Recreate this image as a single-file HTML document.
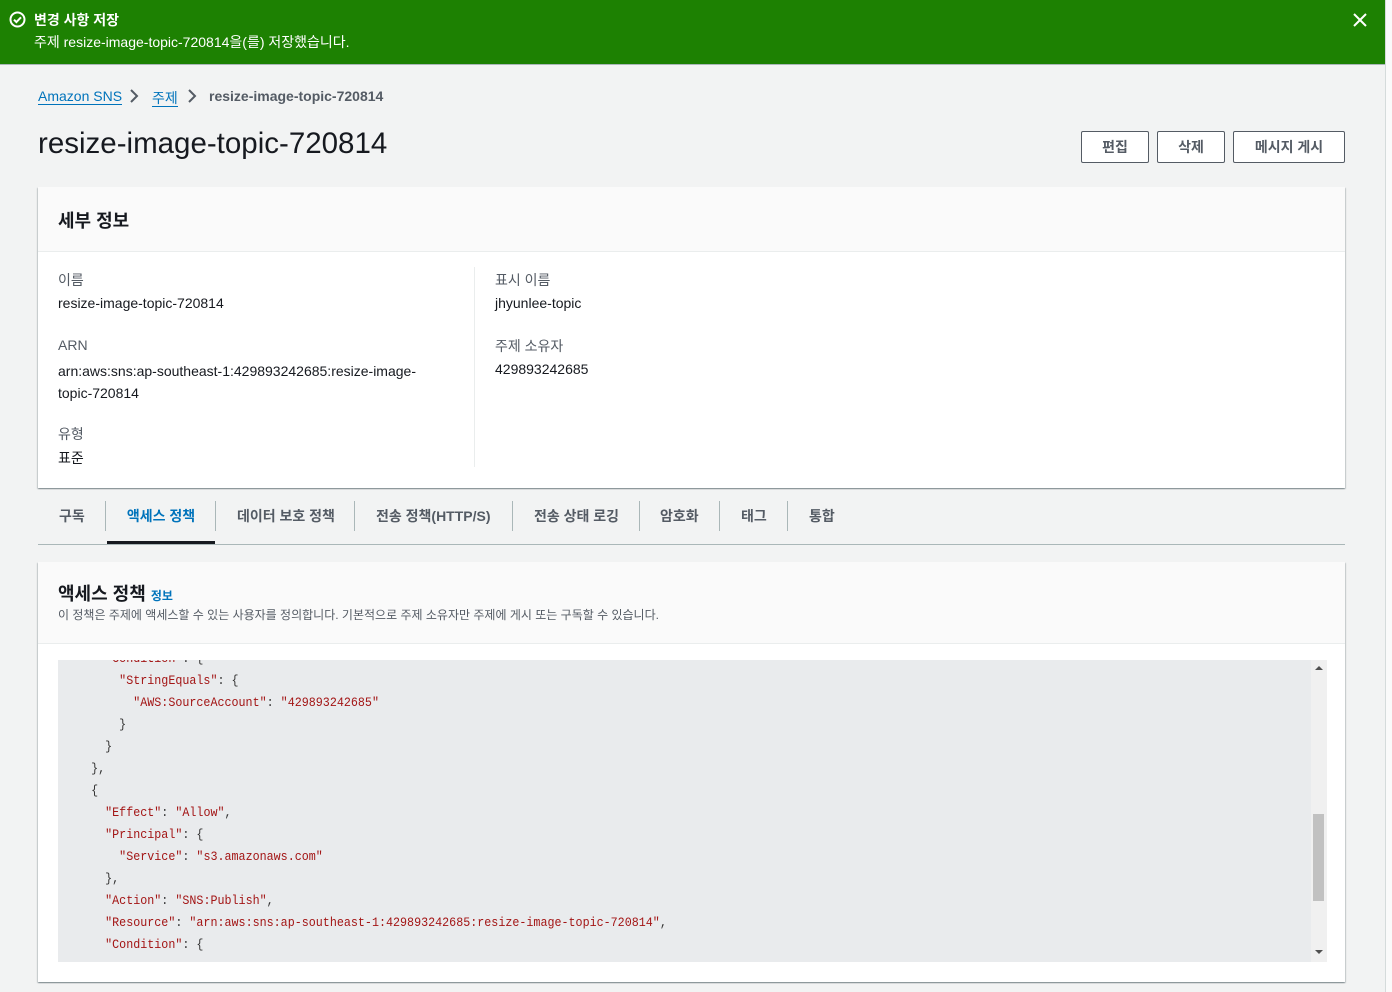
<!DOCTYPE html>
<html><head><meta charset="utf-8"><style>
*{box-sizing:border-box;margin:0;padding:0}
body{width:1392px;height:992px;overflow:hidden;background:#f2f3f3;font-family:"Liberation Sans","Noto Sans CJK KR",sans-serif;color:#16191f;position:relative}
.flash{position:absolute;left:0;top:0;width:1385px;height:65px;background:#1d8102;color:#fff;border-bottom:1px solid #aab7b8}
.flash .t{position:absolute;left:34px;top:10px;font-size:14px;font-weight:bold}
.flash .d{position:absolute;left:34px;top:32px;font-size:14px}
.vline{position:absolute;left:1385px;top:0;width:1px;height:992px;background:#d5dbdb}
.right{position:absolute;left:1386px;top:0;width:6px;height:992px;background:#fafafa}
.bc{position:absolute;top:88px;font-size:14px}
.bc a{color:#0073bb;text-decoration:none;border-bottom:1px solid #0073bb}
h1{position:absolute;left:38px;top:127px;font-size:29.5px;font-weight:normal}
.btn{position:absolute;top:131px;height:32px;border:1px solid #545b64;border-radius:2px;background:#fff;font-size:14px;font-weight:bold;color:#545b64;text-align:center;line-height:30px}
.card{position:absolute;left:38px;width:1307px;background:#fff;box-shadow:0 1px 1px 0 rgba(0,28,36,.3),1px 1px 1px 0 rgba(0,28,36,.15),-1px 1px 1px 0 rgba(0,28,36,.15)}
.ch{background:#fafafa;border-bottom:1px solid #eaeded;position:relative}
.lbl{position:absolute;font-size:14px;color:#545b64}
.val{position:absolute;font-size:14px;color:#16191f}
.tabs{position:absolute;left:38px;top:489px;width:1307px;height:56px;border-bottom:1px solid #aab7b8}
.tab{position:absolute;top:0;height:55px;line-height:54px;font-size:14px;font-weight:bold;color:#545b64}
.sep{position:absolute;top:12px;width:1px;height:30px;background:#aab7b8}
.code{position:absolute;left:20px;top:98px;width:1269px;height:302px;background:#e9ebed;overflow:hidden}
pre{position:absolute;left:5px;top:-12px;font-family:"Liberation Mono",monospace;font-size:13px;line-height:22px;color:#333;transform:scaleX(0.9);transform-origin:0 0}
.k{color:#a31515}
</style></head><body>
<div class="flash">
<svg style="position:absolute;left:9px;top:11px" width="17" height="17" viewBox="0 0 17 17"><circle cx="8.5" cy="8.5" r="7" fill="none" stroke="#fff" stroke-width="2"/><path d="M5 8.7l2.4 2.4 4.6-4.8" fill="none" stroke="#fff" stroke-width="2"/></svg>
<div class="t">변경 사항 저장</div>
<div class="d">주제 resize-image-topic-720814을(를) 저장했습니다.</div>
<svg style="position:absolute;left:1353px;top:13px" width="14" height="14" viewBox="0 0 14 14"><path d="M1 1l12 12M13 1L1 13" stroke="#fff" stroke-width="2"/></svg>
</div>
<div class="vline"></div><div class="right"></div>
<div class="bc" style="left:38px"><a>Amazon SNS</a></div>
<svg style="position:absolute;left:129px;top:89px" width="10" height="14"><path d="M2 1l6 6-6 6" fill="none" stroke="#545b64" stroke-width="2"/></svg>
<div class="bc" style="left:152px"><a>주제</a></div>
<svg style="position:absolute;left:187px;top:89px" width="10" height="14"><path d="M2 1l6 6-6 6" fill="none" stroke="#545b64" stroke-width="2"/></svg>
<div class="bc" style="left:209px;color:#545b64;font-weight:bold">resize-image-topic-720814</div>
<h1>resize-image-topic-720814</h1>
<div class="btn" style="left:1081px;width:68px">편집</div>
<div class="btn" style="left:1157px;width:68px">삭제</div>
<div class="btn" style="left:1233px;width:112px">메시지 게시</div>

<div class="card" style="top:187px;height:301px">
<div class="ch" style="height:65px"><div style="position:absolute;left:20px;top:20px;font-size:18px;font-weight:bold">세부 정보</div></div>
<div style="position:absolute;left:436px;top:80px;width:1px;height:200px;background:#eaeded"></div>
<div class="lbl" style="left:20px;top:83px">이름</div>
<div class="val" style="left:20px;top:108px">resize-image-topic-720814</div>
<div class="lbl" style="left:20px;top:150px">ARN</div>
<div class="val" style="left:20px;top:173px;line-height:22px;width:380px">arn:aws:sns:ap-southeast-1:429893242685:resize-image-topic-720814</div>
<div class="lbl" style="left:20px;top:237px">유형</div>
<div class="val" style="left:20px;top:261px">표준</div>
<div class="lbl" style="left:457px;top:83px">표시 이름</div>
<div class="val" style="left:457px;top:108px">jhyunlee-topic</div>
<div class="lbl" style="left:457px;top:149px">주제 소유자</div>
<div class="val" style="left:457px;top:174px">429893242685</div>
</div>

<div class="tabs">
<div class="tab" style="left:21px">구독</div>
<div class="sep" style="left:67px"></div>
<div class="tab" style="left:69px;width:108px;text-align:center;color:#0073bb;border-bottom:3px solid #16191f">액세스 정책</div>
<div class="sep" style="left:177px"></div>
<div class="tab" style="left:199px">데이터 보호 정책</div>
<div class="sep" style="left:316px"></div>
<div class="tab" style="left:338px">전송 정책(HTTP/S)</div>
<div class="sep" style="left:474px"></div>
<div class="tab" style="left:496px">전송 상태 로깅</div>
<div class="sep" style="left:601px"></div>
<div class="tab" style="left:622px">암호화</div>
<div class="sep" style="left:681px"></div>
<div class="tab" style="left:703px">태그</div>
<div class="sep" style="left:749px"></div>
<div class="tab" style="left:771px">통합</div>
</div>

<div class="card" style="top:562px;height:420px">
<div class="ch" style="height:82px">
<div style="position:absolute;left:20px;top:18px;font-size:18px;font-weight:bold">액세스 정책 <span style="font-size:12px;color:#0073bb">정보</span></div>
<div style="position:absolute;left:20px;top:44px;font-size:12px;color:#545b64">이 정책은 주제에 액세스할 수 있는 사용자를 정의합니다. 기본적으로 주제 소유자만 주제에 게시 또는 구독할 수 있습니다.</div>
</div>
<div class="code">
<pre>      <span class="k">"Condition"</span>: {
        <span class="k">"StringEquals"</span>: {
          <span class="k">"AWS:SourceAccount"</span>: <span class="k">"429893242685"</span>
        }
      }
    },
    {
      <span class="k">"Effect"</span>: <span class="k">"Allow"</span>,
      <span class="k">"Principal"</span>: {
        <span class="k">"Service"</span>: <span class="k">"s3.amazonaws.com"</span>
      },
      <span class="k">"Action"</span>: <span class="k">"SNS:Publish"</span>,
      <span class="k">"Resource"</span>: <span class="k">"arn:aws:sns:ap-southeast-1:429893242685:resize-image-topic-720814"</span>,
      <span class="k">"Condition"</span>: {</pre>
<div style="position:absolute;left:1253px;top:0;width:16px;height:302px;background:#f0f0f0"></div>
<div style="position:absolute;left:1255px;top:154px;width:11px;height:87px;background:#c1c1c1"></div>
<svg style="position:absolute;left:1256px;top:5px" width="10" height="6"><path d="M1 5h8L5 1z" fill="#505050"/></svg>
<svg style="position:absolute;left:1256px;top:289px" width="10" height="6"><path d="M1 1h8L5 5z" fill="#505050"/></svg>
</div>
</div>
</body></html>
